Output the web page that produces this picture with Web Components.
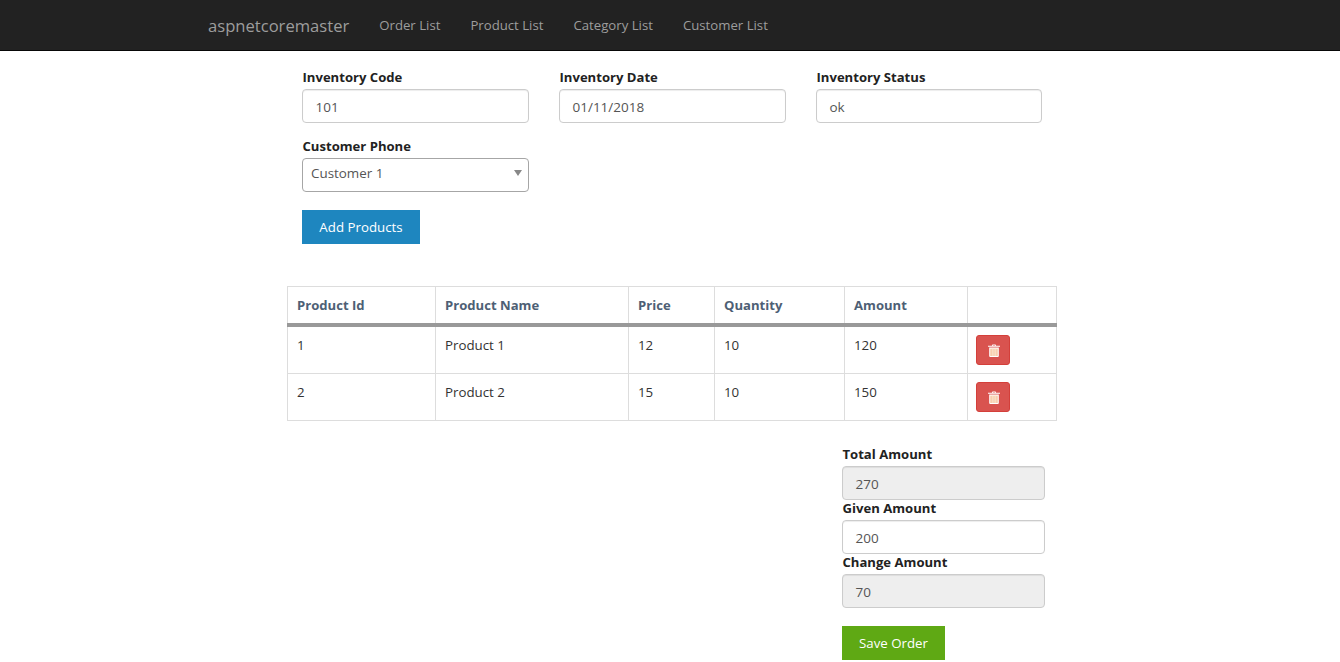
<!DOCTYPE html>
<html>
<head>
<meta charset="utf-8">
<title>aspnetcoremaster</title>
<style>
  html, body { margin: 0; padding: 0; background: #fff; }
  body { font-family: "Open Sans", "Noto Sans", sans-serif; font-size: 14px; color: #333; overflow: hidden; height: 662px; }
</style>
</head>
<body>
<app-navbar brand="aspnetcoremaster">
  <a>Order List</a>
  <a>Product List</a>
  <a>Category List</a>
  <a>Customer List</a>
</app-navbar>

<order-page>
  <form-field slot="top" label="Inventory Code" value="101"></form-field>
  <form-field slot="top" label="Inventory Date" value="01/11/2018"></form-field>
  <form-field slot="top" label="Inventory Status" value="ok"></form-field>
  <form-field slot="top" label="Customer Phone" value="Customer 1" type="select"></form-field>
  <flat-button slot="add" color="#1e86bf" width="118">Add Products</flat-button>
  <order-table slot="table"></order-table>
  <form-field slot="totals" compact label="Total Amount" value="270" disabled></form-field>
  <form-field slot="totals" compact label="Given Amount" value="200"></form-field>
  <form-field slot="totals" compact label="Change Amount" value="70" disabled></form-field>
  <flat-button slot="save" color="#5fa914" width="103">Save Order</flat-button>
</order-page>

<script>
class AppNavbar extends HTMLElement {
  constructor() {
    super();
    this.attachShadow({ mode: "open" }).innerHTML = `
      <style>
        :host { display: block; background: #222; border-bottom: 1px solid #080808; height: 50px; }
        nav { display: flex; align-items: center; height: 49px; padding-left: 208px; }
        .brand { font-size: 16.6px; color: #9d9d9d; margin-right: 30px; position: relative; top: 1px; }
        ::slotted(a) { color: #9d9d9d; margin-right: 30px; font-size: 13.2px; }
      </style>
      <nav><span class="brand">${this.getAttribute("brand")}</span><slot></slot></nav>`;
  }
}

class OrderPage extends HTMLElement {
  constructor() {
    super();
    this.attachShadow({ mode: "open" }).innerHTML = `
      <style>
        :host { display: block; width: 770px; margin-left: 287px; }
        .top { display: grid; grid-template-columns: 227px 227px 226px; column-gap: 30px; row-gap: 13px; padding: 16px 15px 0; }
        .add { padding: 18px 15px 0; }
        .table { margin-top: 42px; }
        .totals { display: flex; flex-direction: column; width: 203px; margin: 23px 0 0 555px; }
        .save { margin: 20px 0 0 555px; }
      </style>
      <div class="top"><slot name="top"></slot></div>
      <div class="add"><slot name="add"></slot></div>
      <div class="table"><slot name="table"></slot></div>
      <div class="totals"><slot name="totals"></slot></div>
      <div class="save"><slot name="save"></slot></div>`;
  }
}

class FormField extends HTMLElement {
  constructor() {
    super();
    const isSelect = this.getAttribute("type") === "select";
    const arrow = isSelect ? '<i class="arrow"></i>' : "";
    this.attachShadow({ mode: "open" }).innerHTML = `
      <style>
        :host { display: block; }
        label { display: block; font-weight: 700; font-size: 13.1px; line-height: 20px; color: #222; margin-bottom: 2px; padding-left: .5px; }
        :host([compact]) .box { margin-bottom: -2px; }
        .box { box-sizing: border-box; height: 34px; line-height: 34px; border: 1px solid #ccc; border-radius: 4px; padding: 0 12.5px; color: #555; background: #fff; box-shadow: inset 0 1px 1px rgba(0,0,0,.075); position: relative; font-size: 13.5px; }
        :host([disabled]) .box { background: #eee; }
        :host([type="select"]) .box { border-color: #a6a6a6; padding-left: 8px; box-shadow: none; line-height: 28px; font-size: 13.4px; }
        .arrow { position: absolute; right: 6px; top: 11px; border: 4px solid transparent; border-top: 6px solid #888; border-bottom: 0; }
      </style>
      <label>${this.getAttribute("label")}</label>
      <div class="box">${this.getAttribute("value")}${arrow}</div>`;
  }
}

class FlatButton extends HTMLElement {
  constructor() {
    super();
    this.attachShadow({ mode: "open" }).innerHTML = `
      <style>
        :host { display: block; box-sizing: border-box; height: 34px; line-height: 34px; text-align: center; color: #fff; font-size: 13.3px;
          width: ${this.getAttribute("width")}px; background: ${this.getAttribute("color")}; }
      </style>
      <slot></slot>`;
  }
}

class DeleteButton extends HTMLElement {
  constructor() {
    super();
    this.attachShadow({ mode: "open" }).innerHTML = `
      <style>
        :host { display: flex; align-items: center; justify-content: center; box-sizing: border-box; width: 34px; height: 30px; background: #d9534f; border: 1px solid #d43f3a; border-radius: 3px; margin-left: -1px; padding-left: 2px; }
        svg { display: block; }
      </style>
      <svg width="12" height="13" viewBox="0 0 12 13">
        <path fill="#fff" d="M4 1.8 L4.4 .4 H7.6 L8 1.8 H12 V2.8 H0 V1.8 Z M5 1.8 H7 L6.8 1.2 H5.2 Z"/>
        <path fill="#fff" d="M1.2 3.6 H10.8 V12 Q10.8 13 9.8 13 H2.2 Q1.2 13 1.2 12 Z"/>
        <path fill="#f8cfae" d="M2.2 4.6 H9.8 V12 H2.2 Z"/>
        <path fill="#fbe6d4" d="M4 4.6 H4.6 V12 H4 Z M5.7 4.6 H6.3 V12 H5.7 Z M7.4 4.6 H8 V12 H7.4 Z"/>
      </svg>`;
  }
}

class OrderTable extends HTMLElement {
  constructor() {
    super();
    const heads = ["Product Id", "Product Name", "Price", "Quantity", "Amount", ""];
    const rows = [
      ["1", "Product 1", "12", "10", "120"],
      ["2", "Product 2", "15", "10", "150"],
    ];
    const widths = [148, 193, 86, 130, 123, 89];
    this.attachShadow({ mode: "open" }).innerHTML = `
      <style>
        :host { display: block; }
        table { border-collapse: collapse; table-layout: fixed; width: 769px; font-size: 13.3px; color: #333; }
        th, td { border: 1px solid #ddd; padding: 8px 9px; text-align: left; vertical-align: top; line-height: 20px; }
        th { color: #4e5f75; font-weight: 700; font-size: 13.1px; height: 20px; padding: 8px 9px; border-bottom: 4px solid #999; }
        td { height: 30px; }
      </style>
      <table>
        <colgroup>${widths.map((w) => `<col style="width:${w}px">`).join("")}</colgroup>
        <tr>${heads.map((h) => `<th>${h}</th>`).join("")}</tr>
        ${rows.map((r) => `<tr>${r.map((c) => `<td>${c}</td>`).join("")}<td><delete-button></delete-button></td></tr>`).join("")}
      </table>`;
  }
}

customElements.define("app-navbar", AppNavbar);
customElements.define("order-page", OrderPage);
customElements.define("form-field", FormField);
customElements.define("flat-button", FlatButton);
customElements.define("delete-button", DeleteButton);
customElements.define("order-table", OrderTable);
</script>
</body>
</html>
